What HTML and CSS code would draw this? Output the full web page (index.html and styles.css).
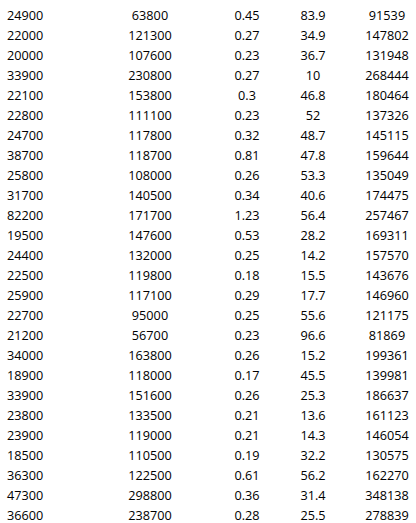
FILE: index.html
```html
<!DOCTYPE html>
<html>
<head>
<meta charset="utf-8">
<link rel="stylesheet" href="styles.css">
</head>
<body>
<div class="sheet">
<div class="row"><span class="c1">24900</span><span class="c2">63800</span><span class="c3">0.45</span><span class="c4">83.9</span><span class="c5">91539</span></div>
<div class="row"><span class="c1">22000</span><span class="c2">121300</span><span class="c3">0.27</span><span class="c4">34.9</span><span class="c5">147802</span></div>
<div class="row"><span class="c1">20000</span><span class="c2">107600</span><span class="c3">0.23</span><span class="c4">36.7</span><span class="c5">131948</span></div>
<div class="row"><span class="c1">33900</span><span class="c2">230800</span><span class="c3">0.27</span><span class="c4">10</span><span class="c5">268444</span></div>
<div class="row"><span class="c1">22100</span><span class="c2">153800</span><span class="c3">0.3</span><span class="c4">46.8</span><span class="c5">180464</span></div>
<div class="row"><span class="c1">22800</span><span class="c2">111100</span><span class="c3">0.23</span><span class="c4">52</span><span class="c5">137326</span></div>
<div class="row"><span class="c1">24700</span><span class="c2">117800</span><span class="c3">0.32</span><span class="c4">48.7</span><span class="c5">145115</span></div>
<div class="row"><span class="c1">38700</span><span class="c2">118700</span><span class="c3">0.81</span><span class="c4">47.8</span><span class="c5">159644</span></div>
<div class="row"><span class="c1">25800</span><span class="c2">108000</span><span class="c3">0.26</span><span class="c4">53.3</span><span class="c5">135049</span></div>
<div class="row"><span class="c1">31700</span><span class="c2">140500</span><span class="c3">0.34</span><span class="c4">40.6</span><span class="c5">174475</span></div>
<div class="row"><span class="c1">82200</span><span class="c2">171700</span><span class="c3">1.23</span><span class="c4">56.4</span><span class="c5">257467</span></div>
<div class="row"><span class="c1">19500</span><span class="c2">147600</span><span class="c3">0.53</span><span class="c4">28.2</span><span class="c5">169311</span></div>
<div class="row"><span class="c1">24400</span><span class="c2">132000</span><span class="c3">0.25</span><span class="c4">14.2</span><span class="c5">157570</span></div>
<div class="row"><span class="c1">22500</span><span class="c2">119800</span><span class="c3">0.18</span><span class="c4">15.5</span><span class="c5">143676</span></div>
<div class="row"><span class="c1">25900</span><span class="c2">117100</span><span class="c3">0.29</span><span class="c4">17.7</span><span class="c5">146960</span></div>
<div class="row"><span class="c1">22700</span><span class="c2">95000</span><span class="c3">0.25</span><span class="c4">55.6</span><span class="c5">121175</span></div>
<div class="row"><span class="c1">21200</span><span class="c2">56700</span><span class="c3">0.23</span><span class="c4">96.6</span><span class="c5">81869</span></div>
<div class="row"><span class="c1">34000</span><span class="c2">163800</span><span class="c3">0.26</span><span class="c4">15.2</span><span class="c5">199361</span></div>
<div class="row"><span class="c1">18900</span><span class="c2">118000</span><span class="c3">0.17</span><span class="c4">45.5</span><span class="c5">139981</span></div>
<div class="row"><span class="c1">33900</span><span class="c2">151600</span><span class="c3">0.26</span><span class="c4">25.3</span><span class="c5">186637</span></div>
<div class="row"><span class="c1">23800</span><span class="c2">133500</span><span class="c3">0.21</span><span class="c4">13.6</span><span class="c5">161123</span></div>
<div class="row"><span class="c1">23900</span><span class="c2">119000</span><span class="c3">0.21</span><span class="c4">14.3</span><span class="c5">146054</span></div>
<div class="row"><span class="c1">18500</span><span class="c2">110500</span><span class="c3">0.19</span><span class="c4">32.2</span><span class="c5">130575</span></div>
<div class="row"><span class="c1">36300</span><span class="c2">122500</span><span class="c3">0.61</span><span class="c4">56.2</span><span class="c5">162270</span></div>
<div class="row"><span class="c1">47300</span><span class="c2">298800</span><span class="c3">0.36</span><span class="c4">31.4</span><span class="c5">348138</span></div>
<div class="row"><span class="c1">36600</span><span class="c2">238700</span><span class="c3">0.28</span><span class="c4">25.5</span><span class="c5">278839</span></div>
</div>
</body>
</html>
```
FILE: styles.css
```css
html, body {
  margin: 0;
  padding: 0;
  background: #ffffff;
  overflow: hidden;
}
.sheet {
  width: 416px;
  padding-top: 5px;
  font-family: "Open Sans", "Noto Sans", sans-serif;
  font-size: 12.7px;
  color: #000000;
}
.row {
  display: grid;
  grid-template-columns: 100px 100px 94px 38px 84px;
  height: 20px;
  line-height: 20px;
  white-space: nowrap;
}
.row span {
  text-align: center;
}
.row .c1 {
  text-align: left;
  padding-left: 7px;
}
.row .c5 {
  padding-left: 26px;
}
```
